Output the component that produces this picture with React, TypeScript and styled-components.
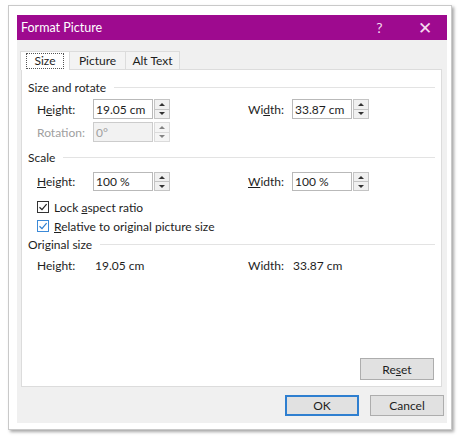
import React from "react";
import styled, { createGlobalStyle, css } from "styled-components";

const GlobalStyle = createGlobalStyle`
    html, body {
        margin: 0;
        padding: 0;
        background: #ffffff;
    }
    body {
        font-family: Lato, "Liberation Sans", sans-serif;
        font-size: 12px;
        color: #1e1e1e;
    }
`;

const Page = styled.div`
    width: 464px;
    height: 443px;
    padding: 5px 0 0 8px;
    box-sizing: border-box;
`;

const Frame = styled.div`
    width: 444px;
    height: 425px;
    box-sizing: border-box;
    padding: 9px 4px 6px 8px;
    background: #ffffff;
    border: 1px solid #c9c9c9;
    box-shadow: 2px 2px 3px rgba(0, 0, 0, 0.35);
`;

const Dialog = styled.div`
    height: 100%;
    display: flex;
    flex-direction: column;
    background: #f0f0f0;
`;

const TitleBar = styled.div`
    height: 25px;
    flex: none;
    display: flex;
    align-items: center;
    padding-left: 4px;
    background: #9e0a8f;
    color: #ffffff;
    font-size: 12.5px;
`;

const Title = styled.span`
    flex: 1;
`;

const TitleButton = styled.span<{ $size?: number }>`
    width: 45px;
    text-align: center;
    font-size: ${(p) => p.$size ?? 14}px;
    color: #f5dcef;
`;

const TabStrip = styled.div`
    display: flex;
    padding: 11px 0 0 3px;
    height: 18px;
    flex: none;
`;

const Tab = styled.div<{ $active?: boolean; $w: number }>`
    width: ${(p) => p.$w}px;
    box-sizing: border-box;
    display: flex;
    align-items: center;
    justify-content: center;
    border: 1px solid #dcdcdc;
    border-bottom: none;
    border-left: none;
    background: #f3f3f3;
    ${(p) =>
        p.$active &&
        css`
            border-left: 1px solid #dcdcdc;
            background: #ffffff;
            position: relative;
            z-index: 1;
            margin-bottom: -1px;
        `}
`;

const FocusText = styled.span`
    border: 1px dotted #555;
    padding: 0 8px;
    line-height: 14px;
`;

const Panel = styled.div`
    flex: 1;
    margin: 0 5px 0 4px;
    background: #ffffff;
    border: 1px solid #dcdcdc;
    display: flex;
    flex-direction: column;
    padding: 10px 6px 6px 6px;
`;

const SectionHeader = styled.div<{ $mt?: number }>`
    display: flex;
    align-items: center;
    height: 14px;
    margin-top: ${(p) => p.$mt ?? 0}px;
    &::after {
        content: "";
        flex: 1;
        height: 1px;
        background: #e3e3e3;
        margin-left: 8px;
    }
`;

const Row = styled.div<{ $mt: number; $h?: number }>`
    display: flex;
    align-items: center;
    height: ${(p) => p.$h ?? 20}px;
    margin-top: ${(p) => p.$mt}px;
    padding-left: 9px;
`;

const Field = styled.div<{ $w: number }>`
    flex: none;
    display: flex;
    align-items: center;
    width: ${(p) => p.$w}px;
    height: 100%;
`;

const Label = styled.span<{ $w: number; $disabled?: boolean }>`
    flex: none;
    width: ${(p) => p.$w}px;
    color: ${(p) => (p.$disabled ? "#a0a0a0" : "#1e1e1e")};
`;

const InputBox = styled.div<{ $disabled?: boolean }>`
    width: 60px;
    height: 100%;
    box-sizing: border-box;
    border: 1px solid ${(p) => (p.$disabled ? "#cccccc" : "#b9b9b9")};
    background: ${(p) => (p.$disabled ? "#f2f2f2" : "#ffffff")};
    color: ${(p) => (p.$disabled ? "#a0a0a0" : "#1e1e1e")};
    display: flex;
    align-items: center;
    padding-left: 2px;
`;

const Spinner = styled.div<{ $disabled?: boolean }>`
    width: 16px;
    height: 100%;
    box-sizing: border-box;
    margin-left: 1px;
    border: 1px solid #c4c4c4;
    background: #f0f0f0;
    display: flex;
    flex-direction: column;
    opacity: ${(p) => (p.$disabled ? 0.6 : 1)};
`;

const SpinHalf = styled.div<{ $down?: boolean }>`
    flex: 1;
    display: flex;
    align-items: center;
    justify-content: center;
    border-top: ${(p) => (p.$down ? "1px solid #c4c4c4" : "none")};
    &::before {
        content: "";
        width: 0;
        height: 0;
        border-left: 3px solid transparent;
        border-right: 3px solid transparent;
        ${(p) =>
            p.$down
                ? "border-top: 3px solid #333;"
                : "border-bottom: 3px solid #333;"}
    }
`;

const Check = styled.div<{ $focus?: boolean }>`
    width: 12px;
    height: 12px;
    box-sizing: border-box;
    border: 1px solid ${(p) => (p.$focus ? "#3c8ad8" : "#333333")};
    margin-right: 5px;
    display: flex;
    align-items: center;
    justify-content: center;
    background: #fff;
`;

const ValueText = styled.span`
    flex: none;
`;

const Spacer = styled.div`
    flex: 1;
`;

const ButtonRow = styled.div<{ $pr: number }>`
    display: flex;
    justify-content: flex-end;
    gap: 11px;
    padding-right: ${(p) => p.$pr}px;
`;

const Button = styled.div<{ $default?: boolean; $h?: number }>`
    width: 74px;
    height: ${(p) => p.$h ?? 21}px;
    box-sizing: border-box;
    display: flex;
    align-items: center;
    justify-content: center;
    background: #e1e1e1;
    border: ${(p) => (p.$default ? "2px solid #2f7fd0" : "1px solid #adadad")};
`;

const Footer = styled.div`
    height: 35px;
    flex: none;
    display: flex;
    flex-direction: column;
    justify-content: center;
    padding-top: 1px;
`;

const Spin = ({ disabled }: { disabled?: boolean }) => (
    <Spinner $disabled={disabled}>
        <SpinHalf />
        <SpinHalf $down />
    </Spinner>
);

const CheckMark = ({ color }: { color: string }) => (
    <svg width="10" height="10" viewBox="0 0 10 10">
        <path d="M1.5 5.2 L4 7.6 L8.6 2.2" fill="none" stroke={color} strokeWidth="1.2" />
    </svg>
);

export default function App() {
    return (
        <Page>
            <GlobalStyle />
            <Frame>
                <Dialog>
                    <TitleBar>
                        <Title>Format Picture</Title>
                        <TitleButton>?</TitleButton>
                        <TitleButton $size={17}>✕</TitleButton>
                    </TitleBar>
                    <TabStrip>
                        <Tab $active $w={50}>
                            <FocusText>Size</FocusText>
                        </Tab>
                        <Tab $w={56}>Picture</Tab>
                        <Tab $w={54}>Alt Text</Tab>
                    </TabStrip>
                    <Panel>
                        <SectionHeader>Size and rotate</SectionHeader>
                        <Row $mt={5}>
                            <Field $w={211}>
                                <Label $w={56}>
                                    H<u>e</u>ight:
                                </Label>
                                <InputBox>19.05 cm</InputBox>
                                <Spin />
                            </Field>
                            <Field $w={150}>
                                <Label $w={44}>
                                    Wi<u>d</u>th:
                                </Label>
                                <InputBox>33.87 cm</InputBox>
                                <Spin />
                            </Field>
                        </Row>
                        <Row $mt={3}>
                            <Field $w={211}>
                                <Label $w={56} $disabled>
                                    Rotation:
                                </Label>
                                <InputBox $disabled>0°</InputBox>
                                <Spin disabled />
                            </Field>
                        </Row>
                        <SectionHeader $mt={8}>Scale</SectionHeader>
                        <Row $mt={8} $h={19}>
                            <Field $w={211}>
                                <Label $w={56}>
                                    <u>H</u>eight:
                                </Label>
                                <InputBox>100 %</InputBox>
                                <Spin />
                            </Field>
                            <Field $w={150}>
                                <Label $w={44}>
                                    <u>W</u>idth:
                                </Label>
                                <InputBox>100 %</InputBox>
                                <Spin />
                            </Field>
                        </Row>
                        <Row $mt={9} $h={14}>
                            <Check>
                                <CheckMark color="#222" />
                            </Check>
                            <span>
                                Lock <u>a</u>spect ratio
                            </span>
                        </Row>
                        <Row $mt={5} $h={14}>
                            <Check $focus>
                                <CheckMark color="#2f7fd0" />
                            </Check>
                            <span>
                                <u>R</u>elative to original picture size
                            </span>
                        </Row>
                        <SectionHeader $mt={4}>Original size</SectionHeader>
                        <Row $mt={7} $h={14}>
                            <Field $w={211}>
                                <Label $w={58}>Height:</Label>
                                <ValueText>19.05 cm</ValueText>
                            </Field>
                            <Field $w={150}>
                                <Label $w={45}>Width:</Label>
                                <ValueText>33.87 cm</ValueText>
                            </Field>
                        </Row>
                        <Spacer />
                        <ButtonRow $pr={1}>
                            <Button $h={22}>
                                <span>
                                    Re<u>s</u>et
                                </span>
                            </Button>
                        </ButtonRow>
                    </Panel>
                    <Footer>
                        <ButtonRow $pr={3}>
                            <Button $default>OK</Button>
                            <Button>Cancel</Button>
                        </ButtonRow>
                    </Footer>
                </Dialog>
            </Frame>
        </Page>
    );
}
